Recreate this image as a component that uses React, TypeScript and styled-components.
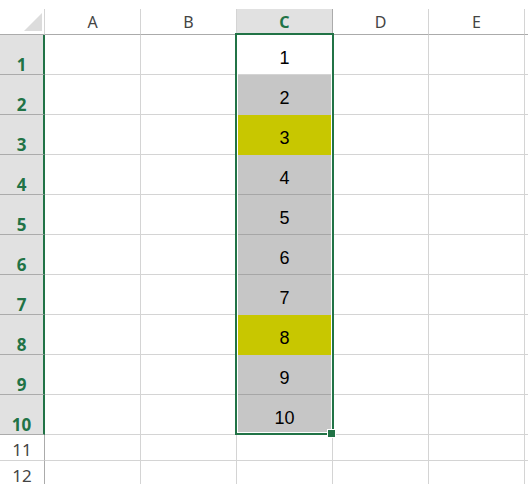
import styled, { createGlobalStyle } from "styled-components";

const GREEN = "#217346";
const GRID = "#d4d4d4";
const HEADER_LINE = "#ababab";

type Fill = "none" | "gray" | "yellow";

const fills: Fill[] = ["none", "gray", "yellow", "gray", "gray", "gray", "gray", "yellow", "gray", "gray"];
const fillColors: Record<Fill, string> = { none: "#ffffff", gray: "#c6c6c6", yellow: "#c8c700" };
const columns = ["A", "B", "C", "D", "E"];
const rows = Array.from({ length: 12 }, (_, i) => i + 1);

const lineBelow = (i: number) => {
    const f = fills[i];
    const next = fills[i + 1];
    if (f === "none") return GRID;
    if (f === "gray" && next === "gray") return "#a6a6a6";
    return fillColors[f];
};

export default function App() {
    return (
        <>
            <GlobalStyle />
            <Sheet>
                <Corner $row={1} $col={1}>
                    <svg width="18" height="18" viewBox="0 0 18 18">
                        <polygon points="18,0 18,18 0,18" fill="#dcdcdc" />
                    </svg>
                </Corner>
                {columns.map((c, ci) => (
                    <ColumnHeader key={c} $row={1} $col={ci + 2} $selected={c === "C"}>{c}</ColumnHeader>
                ))}
                <Rest $row={1} $col={7} $header />
                {rows.map((r) => {
                    const inSel = r <= 10;
                    return [
                        <RowHeader key={`h${r}`} $row={r + 1} $col={1} $selected={inSel} $tall={inSel}>{r}</RowHeader>,
                        ...columns.map((c, ci) =>
                            c === "C" && inSel ? (
                                <ValueCell
                                    key={`${c}${r}`}
                                    $row={r + 1}
                                    $col={ci + 2}
                                    $fill={fillColors[fills[r - 1]]}
                                    $line={lineBelow(r - 1)}
                                >
                                    {r}
                                </ValueCell>
                            ) : (
                                <Cell key={`${c}${r}`} $row={r + 1} $col={ci + 2} />
                            )
                        ),
                        <Rest key={`x${r}`} $row={r + 1} $col={7} />,
                    ];
                })}
                <Selection>
                    <FillHandle />
                </Selection>
            </Sheet>
        </>
    );
}

type Pos = { $row: number; $col: number };

const GlobalStyle = createGlobalStyle`
    html, body {
        margin: 0;
        background: #ffffff;
        overflow: hidden;
    }
    body {
        padding-top: 9px;
    }
`;

const Sheet = styled.div`
    display: grid;
    grid-template-columns: 45px repeat(5, 96px) 1fr;
    grid-template-rows: 26px repeat(10, 40px) repeat(2, 26px);
    width: 528px;
    font-family: "Noto Sans", "Liberation Sans", sans-serif;
`;

const Placed = styled.div<Pos>`
    grid-row: ${(p) => p.$row};
    grid-column: ${(p) => p.$col};
`;

const Corner = styled(Placed)`
    display: flex;
    justify-content: flex-end;
    align-items: flex-end;
    padding: 0 2px 3px 0;
    border-right: 1px solid ${GRID};
    border-bottom: 1px solid ${HEADER_LINE};
`;

const ColumnHeader = styled(Placed)<{ $selected: boolean }>`
    display: flex;
    justify-content: center;
    align-items: center;
    padding-top: 1px;
    font-size: 16px;
    font-weight: ${(p) => (p.$selected ? 700 : 400)};
    color: ${(p) => (p.$selected ? GREEN : "#444444")};
    background: ${(p) => (p.$selected ? "#e1e1e1" : "#ffffff")};
    border-right: 1px solid ${(p) => (p.$selected ? HEADER_LINE : GRID)};
    border-bottom: 1px solid ${HEADER_LINE};
`;

const Rest = styled(Placed)<{ $header?: boolean }>`
    border-bottom: 1px solid ${(p) => (p.$header ? HEADER_LINE : GRID)};
`;

const RowHeader = styled(Placed)<{ $selected: boolean; $tall: boolean }>`
    display: flex;
    justify-content: center;
    align-items: flex-end;
    padding-bottom: ${(p) => (p.$tall ? 1 : 2)}px;
    line-height: 1;
    font-size: 17px;
    font-weight: ${(p) => (p.$selected ? 700 : 400)};
    color: ${(p) => (p.$selected ? GREEN : "#444444")};
    background: ${(p) => (p.$selected ? "#e1e1e1" : "#ffffff")};
    border-right: ${(p) => (p.$selected ? `2px solid ${GREEN}` : `1px solid ${HEADER_LINE}`)};
    border-bottom: 1px solid ${(p) => (p.$selected ? HEADER_LINE : GRID)};
`;

const Cell = styled(Placed)`
    border-right: 1px solid ${GRID};
    border-bottom: 1px solid ${GRID};
`;

const ValueCell = styled(Placed)<{ $fill: string; $line: string }>`
    display: flex;
    justify-content: center;
    align-items: center;
    padding-top: 6px;
    line-height: 1;
    font-family: "Liberation Sans", Arial, sans-serif;
    font-size: 18px;
    color: #000000;
    background: ${(p) => p.$fill};
    border-right: 1px solid ${GRID};
    border-bottom: 1px solid ${(p) => p.$line};
`;

const Selection = styled.div`
    grid-column: 4;
    grid-row: 2 / 12;
    margin: -2px -1px 0 -2px;
    position: relative;
    border: 2px solid ${GREEN};
    box-shadow: inset 0 0 0 1px #ffffff;
    pointer-events: none;
`;

const FillHandle = styled.div`
    position: absolute;
    right: -4px;
    bottom: -5px;
    width: 7px;
    height: 7px;
    background: ${GREEN};
    border: 1px solid #ffffff;
`;
